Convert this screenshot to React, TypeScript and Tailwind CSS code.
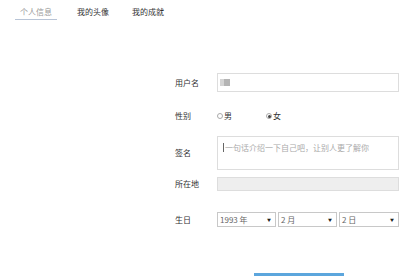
import React from "react";

const font = { fontFamily: '"Noto Sans CJK SC", "Noto Sans", sans-serif' };

function Radio({ checked, label }: { checked: boolean; label: string }) {
  return (
    <div className="flex items-center gap-[1px]">
      <span className="w-[6px] h-[6px] rounded-full border border-[#aaa] bg-white flex items-center justify-center">
        {checked && <span className="w-[3px] h-[3px] rounded-full bg-[#444]" />}
      </span>
      <span>{label}</span>
    </div>
  );
}

function Select({ w, text }: { w: string; text: string }) {
  return (
    <div className={`${w} h-[15px] border border-[#c8c8c8] bg-white flex items-center justify-between pl-[2px] pr-[4px]`}>
      <span className="text-[#666]">{text}</span>
      <span className="text-[4px] text-[#222]">▼</span>
    </div>
  );
}

export default function App() {
  return (
    <div className="w-[420px] h-[276px] bg-white overflow-hidden text-[8px] leading-none text-[#333]" style={font}>
      <div className="flex gap-[15px] pl-[15px] pt-[8px]">
        <div className="px-[5px] pb-[3px] border-b border-[#b8c4d6] text-[#999]">个人信息</div>
        <div className="px-[5px] pb-[3px]">我的头像</div>
        <div className="px-[5px] pb-[3px] ml-[-2px]">我的成就</div>
      </div>

      <div className="ml-[175px] mt-[53px] flex flex-col">
        <div className="flex items-center">
          <div className="w-[42px]">用户名</div>
          <div className="w-[182px] h-[19px] border border-[#ddd] flex items-center pl-[2px] gap-0">
            <span className="w-[4px] h-[7px] bg-[#d4d4d4]" />
            <span className="w-[6px] h-[7px] bg-[#b4b4b4]" />
          </div>
        </div>

        <div className="flex items-center mt-[20px]">
          <div className="w-[42px]">性别</div>
          <div className="flex gap-[34px]">
            <Radio checked={false} label="男" />
            <Radio checked={true} label="女" />
          </div>
        </div>

        <div className="flex items-center mt-[16px]">
          <div className="w-[42px]">签名</div>
          <div className="w-[182px] h-[34px] border border-[#ddd] relative pl-[5px] pt-[6px]">
            <div className="flex items-center text-[#aaa]">
              <span className="w-px h-[9px] bg-[#666] mr-[1px]" />
              一句话介绍一下自己吧，让别人更了解你
            </div>
          </div>
        </div>

        <div className="flex items-center mt-[7px]">
          <div className="w-[42px]">所在地</div>
          <div className="w-[182px] h-[14px] border border-[#ddd] bg-[#eeeeee]" />
        </div>

        <div className="flex items-center mt-[21px]">
          <div className="w-[42px]">生日</div>
          <div className="flex gap-[2px]">
            <Select w="w-[59px]" text="1993 年" />
            <Select w="w-[59px]" text="2 月" />
            <Select w="w-[60px]" text="2 日" />
          </div>
        </div>

        <div className="ml-[79px] mt-[46px] w-[90px] h-[20px] bg-[#5ca6dd]" />
      </div>
    </div>
  );
}
